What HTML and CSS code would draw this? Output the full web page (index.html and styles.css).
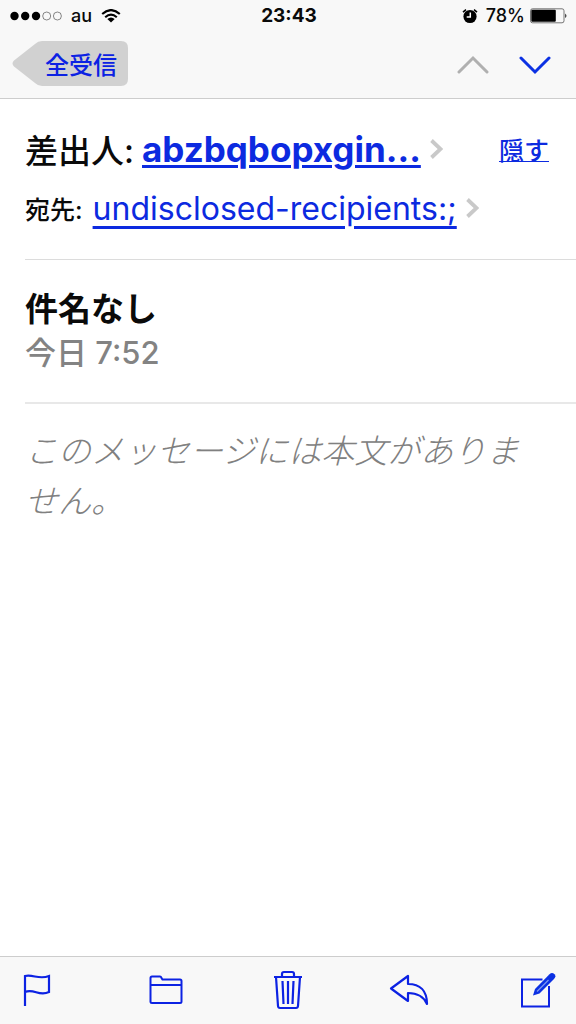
FILE: index.html
```
<!DOCTYPE html>
<html lang="ja">
<head>
<meta charset="utf-8">
<meta name="viewport" content="width=device-width, initial-scale=1">
<title>件名なし</title>
<link rel="stylesheet" href="styles.css">
</head>
<body>
<div class="app">
  <header class="top">
    <div class="status">
      <div class="status-left">
        <svg class="signal" width="52" height="10" viewBox="0 0 52 10" aria-hidden="true">
          <g fill="#000"><circle cx="4.5" cy="5" r="4.2"/><circle cx="15.2" cy="5" r="4.2"/><circle cx="26" cy="5" r="4.2"/></g>
          <g fill="none" stroke="#555" stroke-width=".7"><circle cx="36.7" cy="5" r="4"/><circle cx="47.4" cy="5" r="4"/></g>
        </svg>
        <span>au</span>
        <svg width="20" height="14" viewBox="0 0 20 14" aria-hidden="true">
          <g fill="none" stroke="#000" stroke-width="2.1"><path d="M1.2 5.1Q10-3 18.800 5.100"/><path d="M4.200 8.200Q10 3 15.800 8.200"/></g>
          <path d="M6.300 10Q10 7 13.700 10L10 13.600Z"/>
        </svg>
      </div>
      <span class="clock">23:43</span>
      <div class="status-right">
        <svg width="16" height="16" viewBox="0 0 16 16" aria-hidden="true">
          <circle cx="8" cy="8.500" r="6.600"/>
          <path d="M1 4.200 4 1.700M15 4.200 12 1.700" stroke="#000" stroke-width="1.600"/>
          <path d="M8.300 4.500V9H4.700" fill="none" stroke="#fff" stroke-width="1.500"/>
        </svg>
        <span>78%</span>
        <svg width="38" height="16" viewBox="0 0 38 16" aria-hidden="true">
          <rect x=".5" y=".8" width="33.500" height="14" rx="2" fill="none" stroke="#555" stroke-width=".8"/>
          <rect x="1.300" y="1.800" width="24.500" height="12" rx="1"/>
          <path d="M35.300 5.500Q37.500 7.800 35.300 10Z"/>
        </svg>
      </div>
    </div>
    <nav class="nav">
      <button class="back" type="button">
        <svg class="back-shape" width="116" height="45" viewBox="0 0 116 45" aria-hidden="true"><path fill="#d1d1d1" d="M30 0H109Q116 0 116 7V38Q116 45 109 45H30Q26 45 23 42L2 25.500Q-1 22.500 2 19.500L23 3Q26 0 30 0Z"/></svg>
        <span class="back-label">全受信</span>
      </button>
      <div class="pager">
        <button class="icon" type="button" aria-label="前のメッセージ" disabled><svg width="32" height="20" viewBox="0 0 32 20"><path d="M2 17 16 3 30 17" fill="none" stroke="#b0b0b0" stroke-width="3" stroke-linecap="round"/></svg></button>
        <button class="icon" type="button" aria-label="次のメッセージ"><svg width="32" height="20" viewBox="0 0 32 20"><path d="M2 3 16 17 30 3" fill="none" stroke="#0c31e3" stroke-width="3" stroke-linecap="round"/></svg></button>
      </div>
    </nav>
  </header>

  <main class="message">
    <section class="people">
      <div class="row from">
        <span class="from-label">差出人:</span>
        <a class="from-name" href="#sender">abzbqbopxgin...</a>
        <svg class="chevron" width="13" height="20" viewBox="0 0 13 20" aria-hidden="true"><path d="M1.500 1.500 10.500 10 1.500 18.500" fill="none" stroke="#c9c9c9" stroke-width="3.800"/></svg>
        <a class="hide" href="#hide">隠す</a>
      </div>
      <div class="row to">
        <span class="to-label">宛先:</span>
        <a class="to-name" href="#recipients">undisclosed-recipients:;</a>
        <svg class="chevron" width="13" height="20" viewBox="0 0 13 20" aria-hidden="true"><path d="M1.500 1.500 10.500 10 1.500 18.500" fill="none" stroke="#c9c9c9" stroke-width="3.800"/></svg>
      </div>
    </section>
    <section class="subject">
      <h1 class="title">件名なし</h1>
      <time class="date">今日 7:52</time>
    </section>
    <p class="empty">このメッセージには本文がありません。</p>
  </main>

  <footer class="toolbar">
    <button class="tool tool-edge" type="button" aria-label="フラグ"><svg width="28" height="34" viewBox="0 0 28 34"><path d="M2 33V3C10 1 16 7 26 3V19C16 24 11 15 2 19" fill="none" stroke="#0c22e3" stroke-width="2.200"/></svg></button>
    <button class="tool" type="button" aria-label="フォルダ"><svg width="34" height="30" viewBox="0 0 34 30"><path d="M1.500 27V3Q1.500 1.500 3 1.500H11Q12 1.500 12.500 3L13.500 4.500H31Q32.500 4.500 32.500 6V26.500Q32.500 28 31 28H3Q1.500 28 1.500 26.500M1.500 10H32.500" fill="none" stroke="#0c22e3" stroke-width="2"/></svg></button>
    <button class="tool" type="button" aria-label="ゴミ箱"><svg width="30" height="40" viewBox="0 0 30 40"><path d="M1 7H29M9 7V4Q9 2 11 2H19Q21 2 21 4V7M3 7 5 36Q5.200 38 7 38H23Q24.800 38 25 36L27 7M9.500 11 10.500 34M15 11V34M20.500 11 19.500 34" fill="none" stroke="#0c22e3" stroke-width="2.200"/></svg></button>
    <button class="tool" type="button" aria-label="返信"><svg width="40" height="32" viewBox="0 0 40 32"><path d="M2 14.500 19 2V10C31 10 38 17 38 30C34 21 27 19 19 19V27Z" fill="none" stroke="#0c22e3" stroke-width="2.200" stroke-linejoin="round"/></svg></button>
    <button class="tool tool-edge" type="button" aria-label="新規作成"><svg width="36" height="36" viewBox="0 0 36 36"><path d="M22.500 7.500H2V34.500H29V14" fill="none" stroke="#0c22e3" stroke-width="2"/><path d="M13 23.500 15 17 29.500 2.200Q32-.2 34.500 2.200Q36.500 4.500 34 7L19.500 21.500Z" fill="#0c31e3"/><path d="M17 19.500 28.500 8" stroke="#7d96f1" stroke-width="1.200"/></svg></button>
  </footer>
</div>
</body>
</html>
```
FILE: styles.css
```
* { box-sizing: border-box; }
body {
  margin: 0;
  background: #fff;
  color: #0a0a0a;
  font-family: Inter, "Noto Sans CJK JP", sans-serif;
}
button {
  border: 0;
  padding: 0;
  background: none;
  font: inherit;
}
svg { display: block; }
a { color: #0c2ae0; }

.app {
  min-height: 100vh;
  display: flex;
  flex-direction: column;
}
.top {
  background: #f8f8f8;
  border-bottom: 1px solid #cdcdcd;
}
.status {
  display: grid;
  grid-template-columns: 1fr auto 1fr;
  align-items: center;
  height: 32px;
  padding: 0 8px 0 10px;
  font-size: 18px;
  line-height: 24px;
  font-weight: 500;
}
.status-left, .status-right {
  display: flex;
  align-items: center;
  gap: 9px;
}
.status-right {
  justify-content: flex-end;
  gap: 8px;
}
.status-right svg:last-child { margin-left: -3px; }
.clock {
  font-size: 19px;
  font-weight: 700;
}

.nav {
  display: flex;
  justify-content: space-between;
  align-items: center;
  height: 66px;
  padding: 0 25px 3px 12px;
}
.back { display: grid; align-items: center; }
.back-shape, .back-label { grid-area: 1 / 1; }
.back-label {
  padding: 5px 0 0 33px;
  text-align: left;
  color: #0c22e3;
  font-size: 24px;
  line-height: 36px;
  font-weight: 500;
}
.pager { display: flex; gap: 30px; padding-top: 2px; }

.message { flex: 1; padding-left: 25px; }
.people {
  padding: 22px 0 20px;
  border-bottom: 1px solid #dcdcdc;
}
.row {
  display: flex;
  align-items: center;
  padding-right: 27px;
}
.from { height: 56px; }
.to { height: 62px; }
.from-label {
  margin-right: 8px;
  font-size: 33px;
  font-weight: 500;
}
.from-name {
  font-size: 35px;
  font-weight: 700;
  text-underline-offset: 3px;
  text-decoration-thickness: 3px;
}
.chevron { margin-left: 9px; }
.hide {
  margin-left: auto;
  font-size: 25px;
  font-weight: 500;
  text-decoration-thickness: 1px;
}
.to-label {
  margin-right: 10px;
  font-size: 25px;
  font-weight: 500;
}
.to-name {
  font-size: 32px;
  text-underline-offset: 6px;
  text-decoration-thickness: 3px;
}
.subject {
  padding: 27px 0 28px;
  border-bottom: 2px solid #e8e8e8;
}
.title {
  margin: 0;
  font-size: 33px;
  line-height: 44px;
  font-weight: 700;
}
.date {
  display: block;
  color: #838383;
  font-size: 31px;
  line-height: 43px;
  font-weight: 500;
}
.empty {
  margin: 0;
  padding: 22px 25px 0 0;
  color: #808080;
  font-size: 33px;
  line-height: 50px;
  font-style: italic;
  font-weight: 300;
}

.toolbar {
  display: flex;
  justify-content: space-between;
  align-items: center;
  height: 68px;
  padding: 0 8px 2px 7px;
  background: #f8f8f8;
  border-top: 1px solid #cdcdcd;
}
.tool {
  display: flex;
  justify-content: center;
  align-items: center;
  width: 44px;
  height: 48px;
}
.tool-edge { width: 60px; }
```
